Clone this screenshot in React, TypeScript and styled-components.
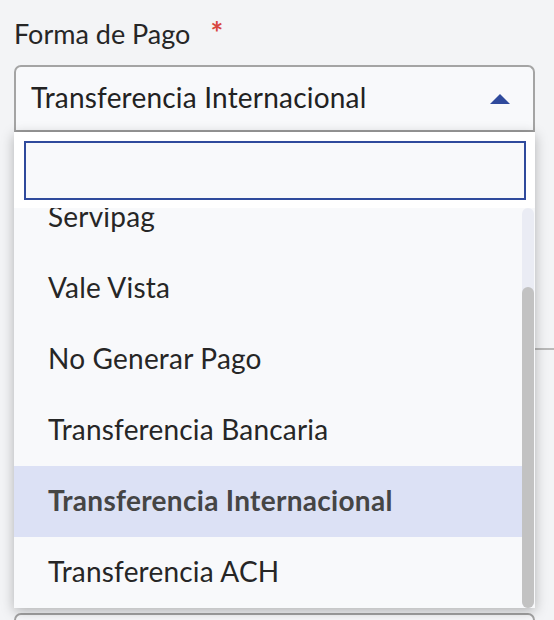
import { useLayoutEffect, useRef } from 'react';
import styled, { createGlobalStyle } from 'styled-components';

const GlobalStyle = createGlobalStyle`
  body {
    margin: 0;
    background: #f3f4f6;
    font-family: Lato, "Noto Sans", sans-serif;
    color: #262626;
  }
`;

const Page = styled.div`
  padding: 17px 19px 0 14px;
  height: 620px;
  box-sizing: border-box;
  overflow: hidden;
`;

const Field = styled.div`
  position: relative;
`;

const Label = styled.div`
  height: 34px;
  font-size: 27px;
  line-height: 34px;
  margin-bottom: 14px;
  color: #262626;

  span {
    color: #d8463f;
    margin-left: 20px;
    font-size: 30px;
    line-height: 1;
    font-weight: 700;
  }
`;

const SelectBox = styled.div`
  height: 67px;
  box-sizing: border-box;
  border: 2px solid #a4a4a4;
  border-bottom-color: #9c9c9c;
  border-radius: 7px 7px 0 0;
  background: #f8f9fb;
  display: flex;
  align-items: center;
  justify-content: space-between;
  padding: 0 23px 4px 15px;
  font-size: 28px;
  letter-spacing: 0.2px;
  color: #222;

  svg {
    margin-top: 4px;
  }
`;

const Dropdown = styled.div`
  position: absolute;
  top: 100%;
  left: 0;
  right: 0;
  height: 476px;
  background: #fff;
  box-shadow: 0 3px 12px rgba(0, 0, 0, 0.28);
  display: flex;
  flex-direction: column;
  padding: 9px 0 0;
  box-sizing: border-box;
  z-index: 5;
`;

const Search = styled.input`
  display: block;
  flex: none;
  height: 59px;
  margin: 0 9px 8px 10px;
  box-sizing: border-box;
  border: 2px solid #2f4a9c;
  background: #f8f9fb;
  outline: none;
  font: inherit;
  font-size: 28px;
`;

const ListArea = styled.div`
  flex: 1;
  min-height: 0;
  display: flex;
  background: #f8f9fb;
  padding-right: 1px;
`;

const List = styled.div`
  flex: 1;
  overflow: hidden;
`;

const ScrollTrack = styled.div`
  width: 12px;
  display: flex;
  flex-direction: column;
  padding-top: 79px;
  box-sizing: border-box;
  background: #eaecf4;
  border-radius: 6px;
`;

const ScrollThumb = styled.div`
  flex: 1;
  background: #c2c2c2;
  border-radius: 6px;
`;

const Option = styled.div<{ $selected?: boolean }>`
  height: 71px;
  box-sizing: border-box;
  display: flex;
  align-items: center;
  padding: 0 0 4px 34px;
  font-size: 28px;
  letter-spacing: ${(p) => (p.$selected ? '0.3px' : '0.2px')};
  white-space: nowrap;
  color: ${(p) => (p.$selected ? '#454545' : '#262626')};
  font-weight: ${(p) => (p.$selected ? 700 : 400)};
  background: ${(p) => (p.$selected ? '#dce1f5' : 'transparent')};
`;

const Divider = styled.div`
  margin: 216px -19px 0 0;
  border-top: 2px solid #b9b9b9;
`;

const NextInput = styled.div`
  margin-top: 263px;
  height: 60px;
  border: 2px solid #a4a4a4;
  border-radius: 7px;
  background: #f8f9fb;
`;

const options = [
  'Cheque',
  'Servipag',
  'Vale Vista',
  'No Generar Pago',
  'Transferencia Bancaria',
  'Transferencia Internacional',
  'Transferencia ACH',
];

export default function App() {
  const listRef = useRef<HTMLDivElement>(null);
  const selected = 'Transferencia Internacional';

  useLayoutEffect(() => {
    if (listRef.current) listRef.current.scrollTop = 97;
  }, []);

  return (
    <Page>
      <GlobalStyle />
      <Field>
        <Label>
          Forma de Pago<span>*</span>
        </Label>
        <SelectBox>
          {selected}
          <svg width="20" height="10" viewBox="0 0 20 10">
            <path d="M10 0 L20 10 L0 10 Z" fill="#2f4a9c" />
          </svg>
        </SelectBox>
        <Dropdown>
          <Search />
          <ListArea>
            <List ref={listRef}>
              {options.map((o) => (
                <Option key={o} $selected={o === selected}>
                  {o}
                </Option>
              ))}
            </List>
            <ScrollTrack>
              <ScrollThumb />
            </ScrollTrack>
          </ListArea>
        </Dropdown>
      </Field>
      <Divider />
      <NextInput />
    </Page>
  );
}
